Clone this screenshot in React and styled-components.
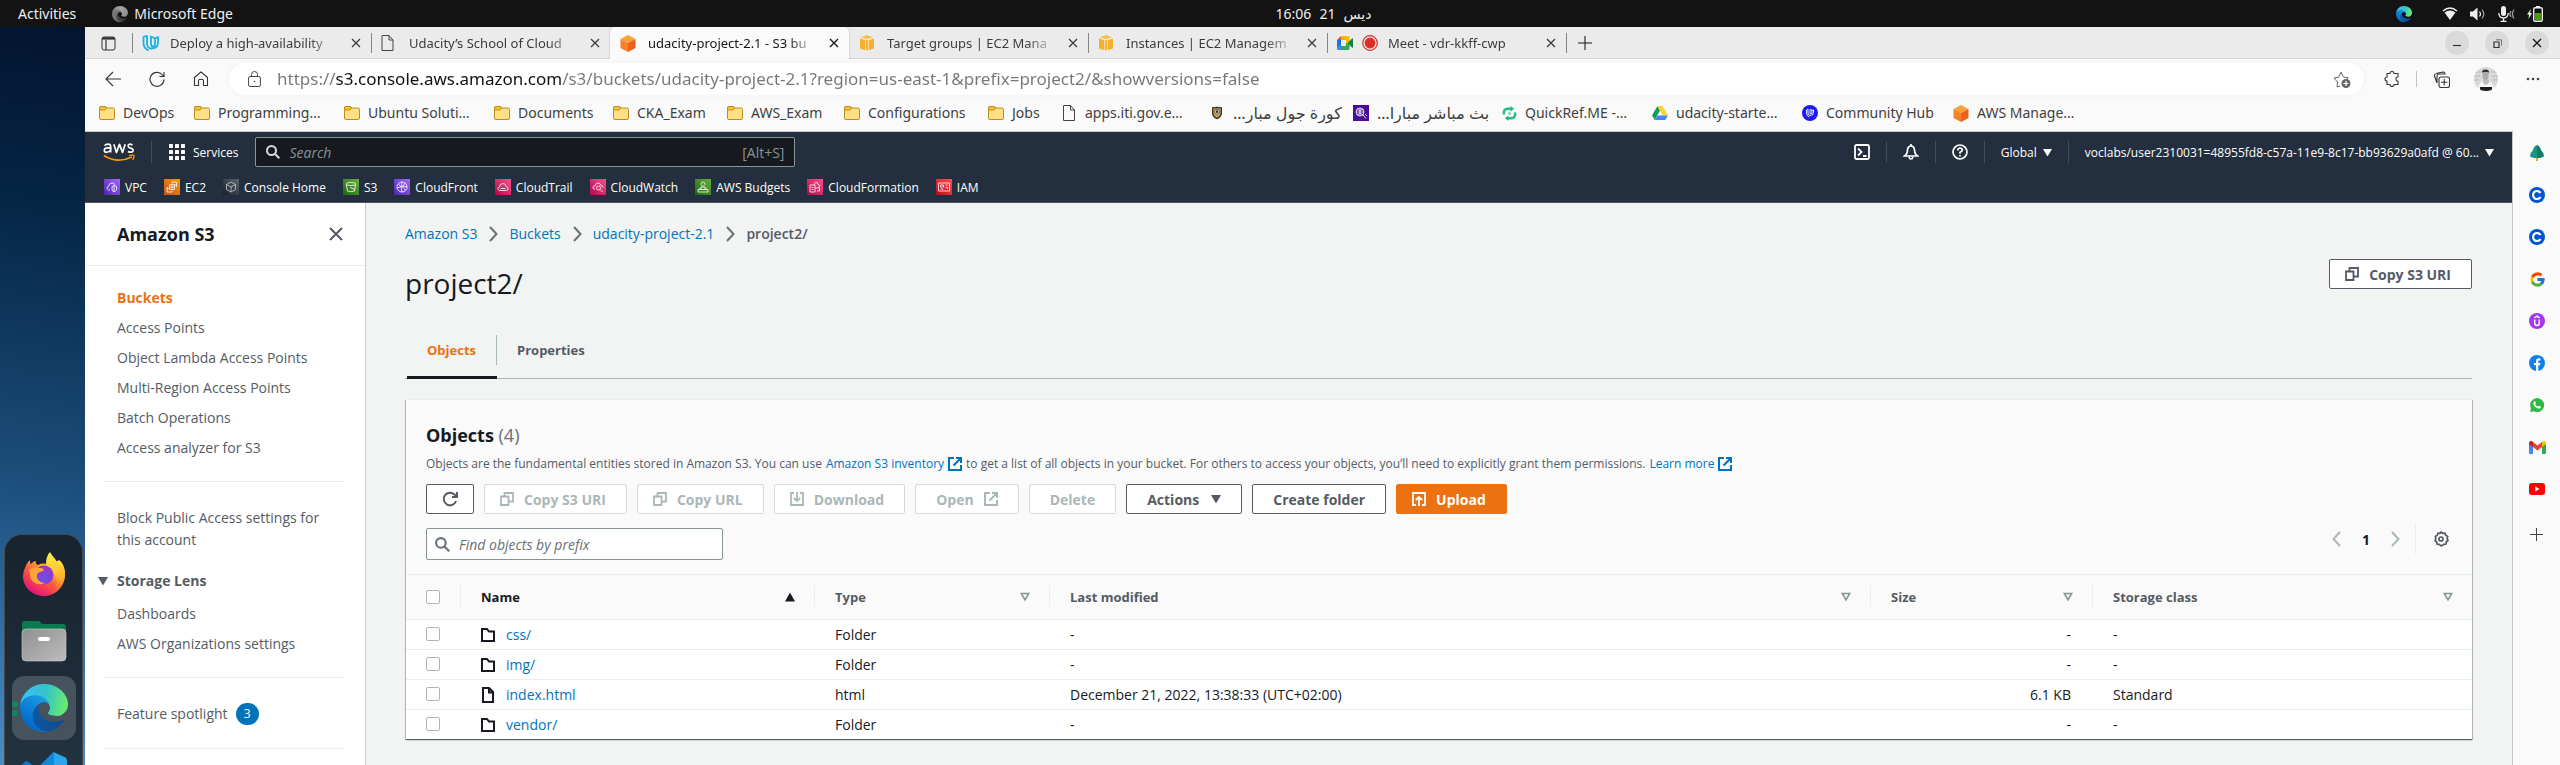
import React from "react";
import styled, { createGlobalStyle, css } from "styled-components";
import { FcGoogle } from "react-icons/fc";

const UI = `"Noto Sans", "DejaVu Sans", sans-serif`;
const AWS = `"Open Sans", "Noto Sans", sans-serif`;

const GlobalStyle = createGlobalStyle`
  * { box-sizing: border-box; }
  body { margin: 0; font-family: ${UI}; font-size: 14px; color: #16191f; }
  button { font: inherit; color: inherit; background: none; border: 0; padding: 0; cursor: pointer; white-space: nowrap; }
  input { font: inherit; color: inherit; min-width: 0; border: 0; background: none; outline: none; padding: 0; }
  svg { display: block; flex: none; }
  a { text-decoration: none; color: inherit; }
  ul, ol { list-style: none; margin: 0; padding: 0; }
  h1, h2, p { margin: 0; }
`;

/* ---------- layout shell ---------- */
const Screen = styled.div`
  height: 100vh;
  display: flex;
  flex-direction: column;
  overflow: hidden;
`;
const SystemBar = styled.header`
  height: 27px;
  flex: none;
  background: #131313;
  color: #f0f0f0;
  display: grid;
  grid-template-columns: 1fr auto 1fr;
  align-items: center;
  padding: 0 17px 0 18px;
  font-size: 14px;
`;
const SystemLeft = styled.div`
  display: flex;
  align-items: center;
  gap: 36px;
`;
const AppMenu = styled.button`
  display: flex;
  align-items: center;
  gap: 6px;
`;
const Clock = styled.button`
  display: flex;
  gap: 8px;
  padding-left: 86px;
`;
const Tray = styled.div`
  display: flex;
  justify-content: flex-end;
  align-items: center;
  gap: 12px;
  & > :first-child { margin-right: 18px; }
`;
const Desktop = styled.div`
  flex: 1;
  min-height: 0;
  display: flex;
`;
const Wallpaper = styled.aside`
  width: 85px;
  flex: none;
  display: flex;
  flex-direction: column;
  justify-content: flex-end;
  padding: 0 2px 0 4px;
  background: linear-gradient(188deg, #03142f 0%, #062645 25%, #0d3459 38%, #1c4f7c 62%, #2b6597 76%, #4a8dc4 100%);
`;
const Dock = styled.nav`
  height: 231px;
  overflow: hidden;
  display: flex;
  flex-direction: column;
  align-items: center;
  gap: 3px;
  padding-top: 7px;
  border: 1px solid #45494d;
  border-bottom: 0;
  border-radius: 18px 18px 0 0;
  background: linear-gradient(#17232e, #22323f);
`;
const DockButton = styled.button`
  position: relative;
  width: 64px;
  height: 64px;
  flex: none;
  border-radius: 12px;
  display: grid;
  place-items: center;
  background: ${(p) => (p.$active ? "#46535d" : "transparent")};
`;
const Running = styled.span`
  position: absolute;
  left: 0;
  top: 25px;
  display: grid;
  gap: 3px;
  i { width: 6px; height: 6px; border-radius: 50%; background: #0f8a5f; }
`;
const Browser = styled.section`
  flex: 1;
  min-width: 0;
  display: flex;
  flex-direction: column;
  background: #fafafa;
`;

/* ---------- browser chrome ---------- */
const TabStrip = styled.div`
  height: 32px;
  flex: none;
  display: flex;
  align-items: center;
  background: #ebebeb;
  box-shadow: inset 0 -1px 0 #d6d6d6;
`;
const TabMenu = styled.button`
  width: 47px;
  padding-left: 16px;
`;
const Tab = styled.div`
  width: 239px;
  height: 32px;
  flex: none;
  display: flex;
  align-items: center;
  padding: 0 10px 0 0;
  color: ${(p) => (p.$active ? "#161616" : "#3c3c3c")};
  &::before {
    content: "";
    width: 1px;
    height: 20px;
    margin-right: 9px;
    background: ${(p) => (p.$bare ? "transparent" : "#858585")};
  }
  ${(p) =>
    p.$active &&
    css`
      background: #fafafa;
      border-radius: 5px 5px 0 0;
      box-shadow: 0 0 2px #b5b5b5;
      clip-path: inset(0 -3px 0 -3px);
    `}
`;
const TabIcon = styled.span`
  min-width: 18px;
  margin-right: 10px;
  display: flex;
  gap: 9px;
  align-items: center;
`;
const TabTitle = styled.span`
  flex: 1;
  font-size: 13px;
  line-height: 20px;
  white-space: nowrap;
  mask-image: linear-gradient(90deg, #000 calc(100% - 30px), transparent);
`;
const TabClose = styled.button`
  width: 10px;
  margin-left: 11px;
`;
const NewTab = styled.button`
  display: flex;
  align-items: center;
  gap: 11px;
  &::before { content: ""; width: 1px; height: 20px; background: #858585; }
`;
const WindowControls = styled.div`
  margin-left: auto;
  display: flex;
  gap: 16px;
  padding-right: 11px;
`;
const Round = styled.button`
  width: 24px;
  height: 24px;
  border-radius: 50%;
  background: #dadada;
  display: grid;
  place-items: center;
`;
const AddressRow = styled.div`
  flex: none;
  height: 40px;
  display: flex;
  align-items: center;
  padding: 0 20px;
  color: #4a4a4a;
`;
const NavButtons = styled.div`
  display: flex;
  gap: 28px;
  margin-right: 20px;
`;
const AddressBox = styled.label`
  flex: 1;
  height: 32px;
  border-radius: 16px;
  background: #fff;
  box-shadow: 0 0 4px #ededed;
  display: flex;
  align-items: center;
  padding: 0 13px 0 19px;
  gap: 16px;
`;
const Address = styled.input`
  flex: 1;
  font-size: 17px;
  line-height: 24px;
  background: linear-gradient(90deg, #767676 58px, #111 58px 285px, #767676 285px);
  background-clip: text;
  -webkit-background-clip: text;
  color: transparent;
`;
const ToolButtons = styled.div`
  display: flex;
  align-items: center;
  margin-left: 20px;
  gap: 16px;
`;
const Bar = styled.span`
  width: 1px;
  height: 16px;
  background: #c4c4c4;
`;
const Avatar = styled.button`
  margin: 0 12px 0 8px;
`;
const Bookmarks = styled.nav`
  flex: none;
  height: 32px;
  padding: 0 14px 4px;
  display: flex;
  align-items: center;
  color: #3f3f3f;
`;
const Bookmark = styled.a`
  width: ${(p) => p.$w}px;
  display: flex;
  align-items: center;
  gap: 8px;
  font-size: 14px;
  line-height: 20px;
  white-space: nowrap;
  span[dir="rtl"] { font-size: 16px; }
`;
const BookmarkIcon = styled.span`
  width: 16px;
  display: grid;
  place-items: center;
`;
const PageRow = styled.div`
  flex: 1;
  min-height: 0;
  display: flex;
`;
const Page = styled.div`
  flex: 1;
  min-width: 0;
  display: flex;
  flex-direction: column;
  border-top: 1px solid #c3cbc8;
  font-family: ${AWS};
`;
const EdgeRail = styled.nav`
  width: 48px;
  border-left: 1px solid #c5c5c5;
  display: flex;
  flex-direction: column;
  align-items: center;
  gap: 26px;
  padding-top: 14px;
  & > :last-child { margin-top: 3px; }
`;
const RailButton = styled.a`
  width: 16px;
  height: 16px;
  display: grid;
  place-items: center;
  color: #444;
`;

/* ---------- AWS header ---------- */
const AwsHeader = styled.header`
  flex: none;
  height: 71px;
  background: #232f3e;
  border-bottom: 1px solid #4a5566;
  color: #fff;
  font-size: 12px;
  padding: 5px 18px 0 18px;
`;
const HeaderRow = styled.div`
  display: flex;
  align-items: center;
  height: 30px;
`;
const Divider = styled.span`
  width: 1px;
  height: 22px;
  background: #414d5c;
`;
const Services = styled.button`
  display: flex;
  align-items: center;
  gap: 8px;
  margin: 0 17px;
`;
const LogoLink = styled.a`
  margin-right: 16px;
`;
const AwsSearch = styled.label`
  width: 540px;
  height: 30px;
  border: 1px solid #879596;
  border-radius: 2px;
  background: #16191f;
  color: #879596;
  display: flex;
  align-items: center;
  gap: 9px;
  padding: 0 10px;
  font-size: 14px;
  svg { color: #d5dbdb; }
  input { flex: 1; }
  input::placeholder { font-style: italic; color: #879596; opacity: 1; }
`;
const Account = styled.div`
  margin-left: auto;
  display: flex;
  align-items: center;
  gap: 16px;
`;
const MenuButton = styled.button`
  display: flex;
  align-items: center;
  gap: 6px;
`;
const Favorites = styled.nav`
  height: 35px;
  padding: 5px 0 0 1px;
  display: flex;
  align-items: center;
  gap: 17px;
`;
const Favorite = styled.a`
  display: flex;
  align-items: center;
  gap: 5px;
`;

/* ---------- S3 side navigation ---------- */
const Console = styled.div`
  flex: 1;
  min-height: 0;
  display: flex;
  background: #f2f3f3;
`;
const SideNav = styled.nav`
  width: 281px;
  flex: none;
  background: #fff;
  border-right: 1px solid #c8cccd;
  color: #545b64;
  line-height: 22px;
  overflow: hidden;
`;
const SideTitle = styled.div`
  height: 63px;
  display: flex;
  align-items: center;
  justify-content: space-between;
  padding: 0 22px 0 32px;
  border-bottom: 1px solid #eaeded;
  font-size: 18px;
  font-weight: 700;
  color: #16191f;
`;
const SideList = styled.ul`
  margin: 0 20px;
  padding: ${(p) => p.$pad || "25px"} 0 ${(p) => p.$end || "22px"} 12px;
  border-bottom: 1px solid #eaeded;
  display: grid;
  gap: 8px;
`;
const SideLink = styled.a`
  display: block;
  font-weight: ${(p) => (p.$current ? 700 : 400)};
  color: ${(p) => (p.$current ? "#ec7211" : "#545b64")};
`;
const Group = styled.button`
  display: flex;
  align-items: center;
  gap: 9px;
  margin: 11px 0 3px -19px;
  font-weight: 700;
`;
const Spotlight = styled(SideLink)`
  display: flex;
  align-items: center;
  gap: 8px;
`;
const Badge = styled.span`
  min-width: 23px;
  height: 22px;
  border-radius: 11px;
  background: #0073bb;
  color: #fff;
  font-size: 12px;
  text-align: center;
`;

/* ---------- content ---------- */
const Content = styled.main`
  flex: 1;
  min-width: 0;
  padding: 0 40px 0 39px;
`;
const Crumbs = styled.ol`
  display: flex;
  align-items: center;
  gap: 11px;
  padding-top: 20px;
  line-height: 22px;
  color: #0073bb;
  li { display: flex; align-items: center; gap: 12px; }
  li:last-child { color: #545b64; font-weight: 600; }
`;
const TitleRow = styled.div`
  display: flex;
  justify-content: space-between;
  align-items: flex-start;
  padding-top: 14px;
  height: 90px;
`;
const Title = styled.h1`
  font-size: 28px;
  font-weight: 400;
  line-height: 36px;
  padding-top: 6px;
`;
const Tabs = styled.div`
  height: 44px;
  display: flex;
  border-bottom: 1px solid #aab7b8;
  margin-bottom: 20px;
`;
const PageTab = styled.button`
  height: 44px;
  margin-left: ${(p) => (p.$active ? 2 : 0)}px;
  padding-bottom: 12px;
  border-bottom: 3px solid ${(p) => (p.$active ? "#16191f" : "transparent")};
  font-size: 13px;
  font-weight: 700;
  color: ${(p) => (p.$active ? "#ec7211" : "#545b64")};
  span { display: block; line-height: 30px; padding: 0 20px; border-right: 1px solid ${(p) => (p.$active ? "#aab7b8" : "transparent")}; }
`;
const Card = styled.section`
  margin-left: 1px;
  background: #fff;
  border-top: 1px solid #eaeded;
  box-shadow: 0 1px 1px 0 rgba(0, 28, 36, 0.5), 1px 1px 1px 0 rgba(0, 28, 36, 0.2), -1px 1px 1px 0 rgba(0, 28, 36, 0.2);
`;
const CardHeader = styled.div`
  background: #fafafa;
  padding: 24px 21px 14px 20px;
  border-bottom: 1px solid #eaeded;
`;
const CardTitle = styled.h2`
  font-size: 18px;
  line-height: 22px;
  span { font-weight: 400; color: #687078; }
`;
const Description = styled.p`
  display: flex;
  align-items: center;
  gap: 4px;
  margin: 8px 0 10px;
  font-size: 12px;
  line-height: 20px;
  color: #545b64;
  white-space: nowrap;
`;
const Link = styled.a`
  color: #0073bb;
  display: inline-flex;
  align-items: center;
  gap: 4px;
`;
const Actions = styled.div`
  display: flex;
  gap: 10px;
`;
const Button = styled.button`
  height: 30px;
  flex: none;
  display: flex;
  align-items: center;
  gap: ${(p) => p.$gap || 10}px;
  padding: ${(p) => (p.$square ? "0 15px" : p.$icon ? "0 20px 0 15px" : "0 20px")};
  border: 1px solid #545b64;
  border-radius: 2px;
  background: #fff;
  font-weight: 700;
  color: #545b64;
  &:disabled { border-color: #d5dbdb; color: #aab7b8; }
  ${(p) => p.$primary && css`border-color: #ec7211; background: #ec7211; color: #fff;`}
`;
const FilterRow = styled.div`
  display: flex;
  justify-content: space-between;
  padding-top: 14px;
`;
const Filter = styled.label`
  width: 297px;
  height: 32px;
  border: 1px solid #879596;
  border-radius: 2px;
  background: #fff;
  color: #687078;
  display: flex;
  align-items: center;
  gap: 9px;
  padding: 0 8px;
  input { flex: 1; }
  input::placeholder { font-style: italic; color: #687078; opacity: 1; }
`;
const Pager = styled.div`
  display: flex;
  align-items: center;
  height: 30px;
  margin-top: -4px;
  padding-right: 2px;
  color: #aab7b8;
  b { width: 50px; text-align: center; color: #16191f; }
`;
const Settings = styled.button`
  margin-left: 15px;
  height: 30px;
  border-left: 1px solid #eaeded;
  padding-left: 17px;
  color: #545b64;
`;
const Table = styled.table`
  width: 100%;
  table-layout: fixed;
  border-collapse: collapse;
  text-align: left;
  th { height: 44px; padding: 0; background: #fafafa; border-bottom: 1px solid #eaeded; font-size: 13px; }
  td { height: 30px; padding: 2px 21px 0; border-bottom: 1px solid #eaeded; line-height: 20px; white-space: nowrap; }
  tr:last-child td { border-bottom: 0; }
`;
const Col = styled.col`
  width: ${(p) => (p.$w ? p.$w + "px" : "auto")};
`;
const HeadCell = styled.div`
  height: 21px;
  display: flex;
  align-items: center;
  justify-content: space-between;
  padding: 0 19px 0 20px;
  border-left: 1px solid #eaeded;
  color: ${(p) => (p.$sorted ? "#16191f" : "#545b64")};
`;
const CheckCell = styled.td`
  && { padding: 0 20px; }
`;
const Check = styled.input.attrs({ type: "checkbox" })`
  appearance: none;
  display: block;
  width: 14px;
  height: 14px;
  margin: 0;
  border: 1px solid #aab7b8;
  border-radius: 2px;
  background: #fff;
  th & { margin-left: 20px; }
`;
const NameLink = styled.a`
  display: flex;
  align-items: center;
  gap: 11px;
  color: #0073bb;
`;
const Right = styled.td`
  text-align: right;
`;

/* ---------- icons ---------- */
const Svg = ({ s = 16, w, h, vb = "0 0 16 16", children, ...p }) => (
  <svg width={w || s} height={h || s} viewBox={vb} fill="none" stroke="currentColor" {...p} aria-hidden="true">
    {children}
  </svg>
);
const EdgeLogo = ({ s, id, grey }) => (
  <Svg s={s} vb="0 0 256 256" stroke="none">
    <defs>
      <linearGradient id={id + "a"} x1="60" y1="177" x2="241" y2="177" gradientUnits="userSpaceOnUse">
        <stop offset="0" stopColor={grey ? "#4a4a4a" : "#0c59a4"} />
        <stop offset="1" stopColor={grey ? "#333" : "#114a8b"} />
      </linearGradient>
      <linearGradient id={id + "b"} x1="150" y1="90" x2="45" y2="230" gradientUnits="userSpaceOnUse">
        <stop offset="0" stopColor={grey ? "#777" : "#1b9de2"} />
        <stop offset="1" stopColor={grey ? "#777" : "#0067ca"} />
      </linearGradient>
      <linearGradient id={id + "c"} x1="20" y1="60" x2="245" y2="110" gradientUnits="userSpaceOnUse">
        <stop offset="0" stopColor={grey ? "#8a8a8a" : "#35c1f1"} />
        <stop offset=".5" stopColor={grey ? "#a5a5a5" : "#36c4c8"} />
        <stop offset="1" stopColor={grey ? "#8d8d8d" : "#66eb6e"} />
      </linearGradient>
    </defs>
    <path fill={`url(#${id}a)`} d="M231 190.500c-3.400 1.800-6.900 3.400-10.500 4.700-11.500 4.300-23.600 6.500-35.900 6.500-47.300 0-88.500-32.500-88.500-74.300.1-11.400 6.400-21.900 16.400-27.300-42.800 1.800-53.800 46.400-53.800 72.500 0 74 68.100 81.400 82.800 81.400 7.900 0 19.800-2.300 27-4.600l1.300-.4c27.600-9.500 51-28.100 66.600-52.800 1.200-1.900.6-4.300-1.200-5.500-1.300-.8-2.900-.9-4.200-.2z" />
    <path fill={`url(#${id}b)`} d="M105.700 241.400c-8.900-5.500-16.600-12.800-22.700-21.300-26.300-36-18.400-86.500 17.600-112.800 3.800-2.700 7.700-5.200 11.900-7.200 3.100-1.500 8.400-4.100 15.500-4 10.100.1 19.600 4.900 25.700 13 4 5.400 6.300 11.900 6.400 18.700 0-.2 24.500-79.600-80-79.600-43.900 0-80 41.700-80 78.200-.2 19.300 4 38.500 12.100 56 27.600 58.800 94.800 87.600 156.400 67.100-21.100 6.600-44.100 3.700-62.900-8.100z" />
    <path fill={`url(#${id}c)`} d="M152.300 148.900c-.8 1-3.300 2.500-3.300 5.700 0 2.600 1.700 5.100 4.700 7.200 14.400 10 41.500 8.700 41.600 8.700 10.700 0 21.100-2.900 30.300-8.300 18.800-11 30.400-31.100 30.400-52.900.3-22.400-8-37.300-11.300-43.900C223.500 23.900 177.700 0 128 0 58 0 1 56.200 0 126.200c.5-36.500 36.800-66 80-66 3.500 0 23.500.3 42 10.100 16.300 8.600 24.900 18.900 30.800 29.200 6.200 10.700 7.300 24.100 7.300 29.500s-2.800 13.300-7.800 19.900z" />
  </Svg>
);
const Firefox = () => (
  <Svg s={44} vb="0 0 44 44" stroke="none">
    <defs>
      <linearGradient id="ffa" x1="36" y1="4" x2="12" y2="42" gradientUnits="userSpaceOnUse">
        <stop offset="0" stopColor="#fff44f" />
        <stop offset=".35" stopColor="#ffb02a" />
        <stop offset=".6" stopColor="#ff5b3a" />
        <stop offset="1" stopColor="#e3147a" />
      </linearGradient>
      <linearGradient id="ffb" x1="26" y1="0" x2="40" y2="36" gradientUnits="userSpaceOnUse">
        <stop offset="0" stopColor="#fff04a" />
        <stop offset=".6" stopColor="#ffc02f" />
        <stop offset="1" stopColor="#ff8a2c" stopOpacity="0.2" />
      </linearGradient>
      <radialGradient id="ffc" cx=".5" cy=".7" r=".7">
        <stop offset="0" stopColor="#6b50e6" />
        <stop offset="1" stopColor="#a032c8" />
      </radialGradient>
    </defs>
    <path fill="url(#ffa)" d="M3 16C4 13 5 11 8 8c0 2 0 3 1 4 2-2 3-3 5-3-1 2 0 3 2 4 4-2 9-2 11 1l10-6c4 3 6 8 6 14 0 12-9 22-21 22S1 35 1 24c0-3 1-6 2-8z" />
    <path fill="url(#ffb)" d="M28 0c2 4 5 6 7 10l2 0c1 1 2 3 2 4l1-1c3 5 4 10 2 16-2 7-7 11-12 12 6-5 6-12 3-18-3-5-9-6-9-12 0-5 2-9 4-11z" />
    <circle cx="22" cy="23" r="9.500" fill="url(#ffc)" />
    <path fill="#ffa436" d="M7 18c4-3 7-2 11-2 3 0 5 2 3 3-3 1-5 1-6 4-1 4 3 8 8 8-8 4-16-2-15-10-1-1-1-2-1-3z" />
  </Svg>
);
const Files = () => (
  <Svg w={46} h={42} vb="0 0 46 42" stroke="none">
    <defs>
      <linearGradient id="fl" x1="0" y1="0" x2="1" y2="1">
        <stop offset="0" stopColor="#8f8f8f" />
        <stop offset="1" stopColor="#bdbdbd" />
      </linearGradient>
    </defs>
    <path fill="#0a7a50" d="M1 4q0-3 3-3h13q2 0 3 2l1 1h21q3 0 3 3v14H1z" />
    <rect x="1" y="9" width="44" height="32" rx="4" fill="url(#fl)" stroke="#d0d0d0" strokeOpacity=".6" />
    <rect x="17" y="17" width="12" height="4" rx="2" fill="#fff" />
  </Svg>
);
const VsCode = () => (
  <Svg s={46} vb="0 0 44 44" stroke="none">
    <path fill="#0a76c4" d="M1 12l3-3q1-1 3 0l26 23v10L1 15z" />
    <path fill="#1289d8" d="M31 0L3 28l4 4L31 14z" />
    <path fill="#2ba5ee" d="M31 0l11 5q2 1 2 3v28q0 2-2 3l-11 5z" />
  </Svg>
);
const Close = ({ s = 10, w = 1 }) => (
  <Svg s={s} vb="0 0 10 10" strokeWidth={w}><path d="M1 1l8 8M9 1l-8 8" /></Svg>
);
const Plus = ({ s = 13 }) => <Svg s={s} vb="0 0 13 13"><path d="M6.500 0v13M0 6.500h13" /></Svg>;
const Udacity = () => (
  <Svg w={18} h={18} vb="0 0 18 18" stroke="#18b3e0" strokeWidth="1.800">
    <path d="M5 1.500l-3.500 1.500v6c0 4 2 6 5 7.500M5 1.500v8c0 3 2 5 4 5 4 0 7-2 7-6V3l-3 1.500M9 2.500v7.500c0 2 1 2.500 2 2.500 2 0 2-2 2-3V4.500z" strokeLinejoin="round" />
  </Svg>
);
const Doc = ({ w = 12 }) => (
  <Svg w={w} h={16} vb="0 0 12 16" stroke="#444"><path d="M1 .5h6.500L11.500 5v10.500H.5V.5zM7.500.5V5h4" /></Svg>
);
const S3Cube = () => (
  <Svg w={16} h={17} vb="0 0 16 17" stroke="none">
    <path fill="#f9a13a" d="M8 0l7.500 4L8 8 .5 4z" /><path fill="#f68128" d="M.5 4L8 8v9L.5 13z" /><path fill="#e8621a" d="M15.500 4L8 8v9l7.500-4z" />
  </Svg>
);
const Ec2Cube = () => (
  <Svg s={16} stroke="none">
    <path fill="#f3b12d" d="M1 3.500l5.500 1.800v10L1 13.500zM15 3.500L9.500 5.300v10L15 13.500zM6.500 5.300h3v10h-3z" />
    <path fill="#f7c04a" d="M8 0l6 2.200L8 4.300 2 2.200z" /><path stroke="#fff" strokeWidth=".6" d="M6.600 5v10.500M9.400 5v10.500" />
  </Svg>
);
const Meet = () => (
  <Svg w={16} h={16} stroke="none">
    <path fill="#1a73e8" d="M0 5h4v6H0z" /><path fill="#ea4335" d="M0 5l4-4v4z" /><path fill="#fbbc04" d="M4 1h7q1.500 0 1.500 1.500V7L9 9V5H4z" />
    <path fill="#34a853" d="M9 8l3.500 1v4.500Q12.500 15 11 15H4v-4h5z" /><path fill="#4285f4" d="M0 11h4v4H1.500Q0 15 0 13.500z" /><path fill="#188038" d="M10.500 8L15 3.500q1-.5 1 .5v8q0 1-1 .5z" />
  </Svg>
);
const Rec = () => (
  <Svg s={16} stroke="#d93025" strokeWidth="1.200"><circle cx="8" cy="8" r="7.300" /><circle cx="8" cy="8" r="4.800" fill="#d93025" /></Svg>
);
const Folder = () => (
  <Svg w={16} h={14} vb="0 0 16 14" stroke="#b98e1e">
    <path fill="#ffdf85" d="M.5 2Q.5.500 2 .5h4q1 0 1.500 1.500H14q1.500 0 1.500 1.500V12q0 1.500-1.500 1.500H2Q.5 13.500.5 12z" />
    <path fill="#f7c52f" d="M.5 2Q.5.500 2 .5h4q1 0 1.500 1.500L6 4H.500z" />
  </Svg>
);
const Shield = () => (
  <Svg w={12} h={14} vb="0 0 14 15" stroke="#3a3320"><path fill="#c8a455" strokeWidth="1.600" d="M2 1.500L7 1l5 .5v7q-1 4-5 5.500Q3 12.500 2 8.500z" /><circle cx="7" cy="6" r="3" fill="#eee" strokeWidth=".8" /><path fill="#222" d="M6 5h2v2H6z" /></Svg>
);
const PurpleBall = () => (
  <Svg s={16}><rect width="16" height="16" fill="#4a0f96" stroke="none" /><g stroke="#fff" strokeWidth=".8"><circle cx="7" cy="7" r="4" /><path d="M3 7h8M7 3v8M4 4.500q3 2 6 0M4 9.500q3-2 6 0M10 10l3 3.500M12 9l2 2" /></g></Svg>
);
const Quick = () => (
  <Svg s={15} stroke="#27b98a" strokeWidth="2.600"><path d="M2 9V6q1-3 4-3h4M14 7v3q-1 3-4 3H6" /><path d="M9 0l4 3-4 3zM7 10l-4 3 4 3z" fill="#27b98a" stroke="none" /><circle cx="8" cy="8" r="1" strokeWidth="1" /></Svg>
);
const Drive = () => (
  <Svg w={16} h={14} vb="0 0 16 14" stroke="none"><path fill="#0f9d58" d="M5.500 0L0 9.500 2.700 14 8 4.500z" /><path fill="#ffcf3f" d="M5.500 0h5L16 9.500h-5.300z" /><path fill="#4285f4" d="M5.500 9.500H16L13.300 14H2.700z" /></Svg>
);
const Hub = () => (
  <Svg s={16} stroke="#fff"><circle cx="8" cy="8" r="8" fill="#1c1cf0" stroke="none" /><path d="M6 4L4.500 5v3q0 3 3 4M6 4v4q0 2 2 2.500 3.500 0 3.500-3V5L10 5.500M8 4.500v4q1 1 2-.5V5z" strokeWidth=".9" /></Svg>
);

const bookmarkItems = [
  ["DevOps", <Folder />, 95], ["Programming…", <Folder />, 150], ["Ubuntu Soluti…", <Folder />, 150], ["Documents", <Folder />, 119],
  ["CKA_Exam", <Folder />, 114], ["AWS_Exam", <Folder />, 117], ["Configurations", <Folder />, 144], ["Jobs", <Folder />, 73],
  ["apps.iti.gov.e…", <Doc />, 148], ["كورة جول مبار…", <Shield />, 144, "rtl"], ["بث مباشر مبارا…", <PurpleBall />, 148, "rtl"],
  ["QuickRef.ME -…", <Quick />, 151], ["udacity-starte…", <Drive />, 150], ["Community Hub", <Hub />, 151], ["AWS Manage…", <S3Cube />, 130],
];
const tabItems = [
  { t: "Deploy a high-availability", i: <Udacity /> },
  { t: "Udacity’s School of Cloud", i: <Doc w={13} /> },
  { t: "udacity-project-2.1 - S3 bu", i: <S3Cube />, active: true },
  { t: "Target groups | EC2 Mana", i: <Ec2Cube />, bare: true },
  { t: "Instances | EC2 Managem", i: <Ec2Cube /> },
  { t: "Meet - vdr-kkff-cwp", i: <><Meet /><Rec /></> },
];

const Tile = ({ id, a, b, children }) => (
  <Svg s={16} stroke="#fff" strokeWidth=".8">
    <defs><linearGradient id={id} x1="0" y1="1" x2="1" y2="0"><stop stopColor={a} /><stop offset="1" stopColor={b} /></linearGradient></defs>
    <rect width="16" height="16" fill={`url(#${id})`} stroke="none" />
    {children}
  </Svg>
);
const cloud = "M5 11.500H4.500Q3 11 3 9.500T4.500 8Q5 4.500 8 4.500T11 7.500Q13 7.500 13 9.500T11.500 11.500";
const favorites = [
  ["VPC", <Tile id="t1" a="#4d27a8" b="#a166ff"><path d="M6 11H4.500Q3 10.500 3 9t1.500-1.500Q5 4 8 4q2.500 0 3 2M8 7.500l2-1 2.500 1V10q0 2-2.500 3-2-1-2-3zM10 7v6" /></Tile>],
  ["EC2", <Tile id="t2" a="#c8511b" b="#ff9900"><path d="M5.500 5.500h5v5h-5zM7 7h2v2H7zM3 8v5h5v-1.500M5 9.500H3M12.500 8V3H8v1.500M11 6h2" /></Tile>],
  ["Console Home", <Tile id="t3" a="#1a1f26" b="#5a6472"><path stroke="#c5cad0" d="M8 3l4.500 2.500v5L8 13l-4.500-2.500v-5zM3.500 5.500L8 8l4.500-2.500M8 8v5" /></Tile>],
  ["S3", <Tile id="t4" a="#1b660f" b="#6cae3e"><path d="M3 5q0-1.500 5-1.500T13 5t-5 1.500T3 5zM3.300 5.500L4.500 12q3 1.500 7 0l1-6.500M7 8.500l5 2" /></Tile>],
  ["CloudFront", <Tile id="t5" a="#4d27a8" b="#a166ff"><circle cx="8" cy="8" r="5" /><path d="M4.500 5q3.500 2 3.500 8M8 3q-2 4 4 8.500M3 9q6-3 10-1M11 4l-2 3" /></Tile>],
  ["CloudTrail", <Tile id="t6" a="#b0084d" b="#ff4f8b"><path d={cloud + "H5"} /><path d="M5.500 9.500h5" /></Tile>],
  ["CloudWatch", <Tile id="t7" a="#b0084d" b="#ff4f8b"><path d="M5 10H4Q2.500 9.500 3 8t2-1q.500-3 3-3t3 2.500q2 0 2 2" /><circle cx="8.500" cy="9" r="2" /><path d="M10 10.500l2.500 2.500" /></Tile>],
  ["AWS Budgets", <Tile id="t8" a="#1b660f" b="#6cae3e"><path d="M3 13h10v-2.500H3zM6 10.500V8h4v2.500M5 10V8.500M11 10V8.500M6 5.500q0-2.500 2-2.500t2 2.500L8 7.500z" /></Tile>],
  ["CloudFormation", <Tile id="t9" a="#b0084d" b="#ff4f8b"><path d="M3 6h5v7H3zM4.500 8.500h2M4.500 10.500h2M8 9h2.500q2 0 2-2T11 5.500Q10.500 3 8.500 3.500 7 4 7 6M12.500 9v3H10" /></Tile>],
  ["IAM", <Tile id="t10" a="#bd0816" b="#ff5252"><path d="M2.500 4h11v8h-11zM4.500 6h3v2h-3zM4.500 10h3M9.500 6h2M9.500 8.500h2v1.500" /></Tile>],
];

const AwsLogo = () => (
  <Svg w={32} h={20} vb="0 0 32 20" strokeWidth="1.700" strokeLinejoin="round">
    <path d="M1.600 3.600Q3 2.200 5 2.200q2.700 0 2.700 2.600v5.600M7.700 6.200Q1.300 5 1.300 8.300q0 2 2.200 2 2.800 0 4.200-2.500" />
    <path d="M10.800 2.200l2.700 8.200 3-8 3 8 2.700-8.200" />
    <path d="M29.500 3Q25.200 1 25.200 4q0 1.500 2.200 2.100 2.700.6 2.700 2.200 0 3-5.200 1.300" />
    <path stroke="#f90" d="M.8 13.500q13.500 8.500 28 1.500" strokeWidth="1.600" />
    <path stroke="#f90" d="M26 13.600q3.500-.8 5-.2.200 2-1.300 4.600" strokeWidth="1.300" />
  </Svg>
);
const Apps = () => (
  <Svg s={16} stroke="none" fill="#fff">{[0, 6, 12].map((x) => [0, 6, 12].map((y) => <rect key={x + "-" + y} x={x} y={y} width="4" height="4" rx=".5" />))}</Svg>
);
const Magnify = ({ s = 14 }) => <Svg s={s} vb="0 0 14 14" strokeWidth="2"><circle cx="5.500" cy="5.500" r="4.500" /><path d="M8.800 8.800L13.300 13.300" /></Svg>;
const Caret = ({ s = 9 }) => <Svg s={s} vb="0 0 10 10" stroke="none" fill="currentColor"><path d="M0 1h10L5 9.500z" /></Svg>;
const SortUp = () => <Svg s={10} vb="0 0 10 10" stroke="none" fill="#16191f"><path d="M5 .5L10 9.500H0z" /></Svg>;
const SortNone = () => <Svg s={10} vb="0 0 10 10" stroke="#879596" strokeWidth="1.600"><path d="M1.300 1.500h7.400L5 8z" /></Svg>;
const Chevron = ({ left, c = "#879596", w = 2 }) => (
  <Svg w={9} h={16} vb="0 0 9 16" stroke={c} strokeWidth={w}><path d={left ? "M8 1L1.500 8 8 15" : "M1 1l6.500 7L1 15"} /></Svg>
);
const Copy = () => <Svg s={14} vb="0 0 14 14" strokeWidth="1.800"><path d="M1 4.500h7.500V13H1zM4.500 4V1H13v8.500H9" /></Svg>;
const External = ({ s = 14 }) => <Svg s={s} vb="0 0 14 14" strokeWidth="2"><path d="M6 1H1v12h12V8M8 1h5v5M13 1L5.500 8.500" /></Svg>;
const Download = () => <Svg s={14} vb="0 0 14 14" strokeWidth="1.800"><path d="M4 1H1v12h12V1h-3M7 0v9M3.800 6L7 9l3.200-3" /></Svg>;
const UploadIcon = () => <Svg s={14} vb="0 0 14 14" strokeWidth="1.800"><path d="M4 13H1V1h12v12h-3M7 14V5M3.800 8L7 5l3.200 3" /></Svg>;
const Refresh = () => <Svg s={16} strokeWidth="2"><path d="M14 10A6.300 6.300 0 1 1 12.500 3.500L14.500 5.500M15 1v5h-5" /></Svg>;
const FolderSmall = () => <Svg w={14} h={14} vb="0 0 14 14" stroke="#16191f" strokeWidth="2"><path d="M1 1h5l2 2.500h5V13H1z" /></Svg>;
const FileSmall = () => <Svg w={14} h={16} vb="0 0 14 16" stroke="#16191f" strokeWidth="2"><path d="M2 1h6l4 4v10H2zM8 1v4.500h4" /></Svg>;
const Gear = () => (
  <Svg s={16} strokeWidth="1.700">
    <path strokeLinejoin="round" d="M8 1l1.800 1.300 2.200-.2.800 2.100 1.900 1.200-.6 2.100.9 2-1.700 1.500-.4 2.200-2.200.2L8 14.900l-1.700-1.500-2.200-.2-.4-2.200L2 9.500l.9-2-.6-2.100 1.900-1.200.8-2.100 2.200.2z" />
    <circle cx="8" cy="8" r="2" />
  </Svg>
);
const CLogo = () => (
  <Svg s={16}><circle cx="8" cy="8" r="8" fill="#0056d2" stroke="none" /><path stroke="#fff" strokeWidth="2.200" d="M11.500 6A4 4 0 1 0 11.500 10" /></Svg>
);
const rail = [
  ["Tree", <Svg s={16} stroke="none"><path fill="#f5a11c" d="M7 11h2v5H7z" /><path fill="#127a6a" d="M8 0q3 1 4 5 3 3 3 6-1 2-7 2z" /><path fill="#1c9482" d="M8 0Q5 1 4 5 1 8 1 11q1 2 7 2z" /></Svg>],
  ["Coursera", <CLogo />],
  ["Coursera for business", <CLogo />],
  ["Google", <FcGoogle size={17} />],
  ["Udemy", <Svg s={16} stroke="#fff"><circle cx="8" cy="8" r="8" fill="#a435f0" stroke="none" /><path strokeWidth="1.500" d="M5.500 4.800L8 3.200l2.500 1.600M5.700 6.500V10q0 2.500 2.300 2.500t2.300-2.500V6.500" /></Svg>],
  ["Facebook", <Svg s={16} stroke="none"><circle cx="8" cy="8" r="8" fill="#0f80ee" /><path fill="#fff" d="M7 16V10.300H5V8h2V6.300q0-3 3-3l1.400.1v2h-1Q9.300 5.400 9.300 6.500V8h2.100l-.4 2.300H9.300V16z" /></Svg>],
  ["WhatsApp", <Svg s={14} stroke="none"><path fill="#2fb843" d="M0 16l1.100-4.200A8 8 0 1 1 4.200 15z" /><path fill="#fff" d="M5 3.800q.8-.3 1.200.6l.6 1.400q0 .5-.8 1.200 1 2 3 2.900l1-1q.4-.3 1 .1l1.400.7q.4 1-.4 1.800-1.200 1.100-3.500.2Q5 10 3.800 7q-.3-2 1.200-3.200z" /></Svg>],
  ["Gmail", <Svg w={17} h={13} vb="0 0 17 13" stroke="none"><path fill="#4285f4" d="M0 2l4 3v8H1q-1 0-1-1z" /><path fill="#34a853" d="M17 2l-4 3v8h3q1 0 1-1z" /><path fill="#ea4335" d="M4 1l4.500 3.500L13 1v5L8.500 9.500 4 6z" /><path fill="#c5221f" d="M0 2Q.5-.8 3 .3L4 1v5L0 3z" /><path fill="#fbbc04" d="M17 2q-.5-2.800-3-1.700L13 1v5l4-3z" /></Svg>],
  ["YouTube", <Svg w={16} h={12} vb="0 0 16 12" stroke="none"><rect width="16" height="12" rx="3" fill="#f00" /><path fill="#fff" d="M6.300 3.500v5L10.500 6z" /></Svg>],
  ["Add", <Plus />],
];

const rows = [
  ["css/", "Folder", "-", "-", "-"],
  ["img/", "Folder", "-", "-", "-"],
  ["index.html", "html", "December 21, 2022, 13:38:33 (UTC+02:00)", "6.1 KB", "Standard"],
  ["vendor/", "Folder", "-", "-", "-"],
];

export default function App() {
  return (
    <Screen>
      <GlobalStyle />
      <SystemBar>
        <SystemLeft>
          <button>Activities</button>
          <AppMenu><EdgeLogo s={16} id="eg" grey />Microsoft Edge</AppMenu>
        </SystemLeft>
        <Clock dir="ltr"><span>16:06</span><span>21</span><span>ديس</span></Clock>
        <Tray>
          <EdgeLogo s={16} id="et" />
          <Svg w={16} h={14} vb="0 0 16 14" stroke="#eee"><path d="M1 4q7-6 14 0" strokeWidth="1.600" /><path fill="#eee" stroke="none" d="M2.500 5.500q5.500-4 11 0L8 13z" /></Svg>
          <Svg w={16} h={14} vb="0 0 16 14" stroke="#eee" strokeWidth="1.200"><path fill="#eee" stroke="none" d="M0 4.500h3L7.500.500v13L3 9.500H0z" /><path d="M9.500 4.500q2 2.500 0 5" /><path stroke="#aaa" d="M12 2.500q3.500 4.500 0 9" /></Svg>
          <Svg w={17} h={16} vb="0 0 17 16" stroke="#eee" strokeWidth="1.300"><rect x="3" y="0" width="5" height="10" rx="2.500" fill="#eee" stroke="none" /><path d="M.8 7q0 5 4.700 5t4.700-5M5.500 12v3M2.500 15.300h6" /><path stroke="#999" d="M13 5q-2 3 0 6M16 3.500q-3 4.500 0 9" /></Svg>
          <Svg w={16} h={16} stroke="#eee" strokeWidth="1.400"><path fill="#eee" stroke="none" d="M4 3L0 8.500h2L1.500 13 5 7H3z" /><path fill="#eee" stroke="none" d="M9 0h4v2H9z" /><rect x="6.700" y="1.800" width="8.600" height="13.400" rx="1.500" /><path fill="#4e9a06" stroke="none" d="M8 7h6v7H8z" /></Svg>
        </Tray>
      </SystemBar>

      <Desktop>
        <Wallpaper>
          <Dock aria-label="Dock">
            <DockButton aria-label="Firefox"><Firefox /></DockButton>
            <DockButton aria-label="Files"><Files /></DockButton>
            <DockButton aria-label="Microsoft Edge" $active><EdgeLogo s={48} id="ed" /><Running><i /><i /></Running></DockButton>
            <DockButton aria-label="Visual Studio Code"><VsCode /></DockButton>
          </Dock>
        </Wallpaper>

        <Browser>
          <TabStrip>
            <TabMenu aria-label="Tab actions"><Svg s={15} vb="0 0 15 15" stroke="#333"><rect x="1" y="1" width="13" height="13" rx="2" /><path d="M1 3h13M5 4v10" strokeWidth="1.200" /><path d="M1.500 2.200h12" strokeWidth="2" /></Svg></TabMenu>
            {tabItems.map((t) => (
              <Tab key={t.t} $active={t.active} $bare={t.active || t.bare}>
                <TabIcon>{t.i}</TabIcon>
                <TabTitle>{t.t}</TabTitle>
                <TabClose aria-label="Close tab"><Close w={1.3} /></TabClose>
              </Tab>
            ))}
            <NewTab aria-label="New tab"><Plus s={14} /></NewTab>
            <WindowControls>
              <Round aria-label="Minimise"><Svg s={10} vb="0 0 10 10" stroke="#333"><path d="M1 7.500h8" strokeWidth="1.200" /></Svg></Round>
              <Round aria-label="Restore"><Svg s={9} vb="0 0 9 9" stroke="#333"><path d="M1 3h5v5.500H1z" strokeWidth="1.200" /><path stroke="#777" d="M3 .8h5.500V6.500" /></Svg></Round>
              <Round aria-label="Close"><Close s={10} w={1.4} /></Round>
            </WindowControls>
          </TabStrip>

          <AddressRow>
            <NavButtons>
              <button aria-label="Back"><Svg s={16} stroke="#333" strokeWidth="1.100"><path d="M16 8H1M8 1L1 8l7 7" /></Svg></button>
              <button aria-label="Reload"><Svg s={16} stroke="#333" strokeWidth="1.100"><path d="M15 8.500A7 7 0 1 1 13.500 4L15 5M15 1v4.500h-4.500" /></Svg></button>
              <button aria-label="Home"><Svg s={16} stroke="#333" strokeWidth="1.100"><path d="M1.500 7Q1.500 6.500 2 6L8 .8l6 5.200q.5.500.5 1v7.500h-4V10q0-1.500-1-1.500h-3q-1 0-1 1.500v4.500h-4z" strokeLinejoin="round" /></Svg></button>
            </NavButtons>
            <AddressBox>
              <Svg w={13} h={16} vb="0 0 13 16" stroke="#444"><rect x=".6" y="5.500" width="11.800" height="10" rx="1.500" /><path d="M3.500 5.500V3.500a3 3 0 0 1 6 0v2" /><circle cx="6.500" cy="10.500" r=".8" fill="#444" stroke="none" /></Svg>
              <Address aria-label="Address" defaultValue="https://s3.console.aws.amazon.com/s3/buckets/udacity-project-2.1?region=us-east-1&prefix=project2/&showversions=false" />
              <Svg w={18} h={17} vb="0 0 18 17" stroke="#666"><path d="M7 15l-3 1 .5-5L1 7l4.800-.8L8 1l2.300 5 5 .8-2 2" /><circle cx="13" cy="12.500" r="4.500" fill="#666" stroke="none" /><path stroke="#fff" strokeWidth="1.200" d="M13 10v5M10.500 12.500h5" /></Svg>
            </AddressBox>
            <ToolButtons>
              <button aria-label="Extensions"><Svg s={16} stroke="#333" strokeWidth="1.100"><path strokeLinejoin="round" d="M3 2.500h3q0-2 2-2t2 2h4v3.500q-2-.3-2 2t2 2v3.500h-4q0 2-2 2t-2-2H3V10Q1 10 1 8t2-2z" /></Svg></button>
              <Bar />
              <button aria-label="Collections"><Svg w={17} h={17} vb="0 0 17 17" stroke="#333" strokeWidth="1.100"><rect x="6" y="6" width="10.500" height="10.500" rx="2" /><path d="M11.200 8v6.500M8 11.200h6.500M4 12L1.500 5Q1 3.500 2.500 3M4 12V5q0-2 2-2h6q0-2-2-2L3 2.500" /></Svg></button>
              <Avatar aria-label="Profile"><Svg s={24} vb="0 0 24 24" stroke="none"><defs><clipPath id="av"><circle cx="12" cy="12" r="12" /></clipPath></defs><g clipPath="url(#av)"><path fill="#d9d9d9" d="M0 0h24v24H0z" /><path stroke="#b8b8b8" d="M0 5h7M0 9h6M0 13h5M17 5h7M18 9h6M19 13h5" /><path fill="#f3f3f3" d="M4 24q0-8 5-10h6q5 2 5 10z" /><path fill="#aaa" d="M8.500 5h6v5q-1 4-3 4t-3-4z" /><path fill="#333" d="M8 6Q7.500 2.500 11.500 2.500T15 6l-1-1H9z" /><path fill="#bbb" d="M9 13h6v3l-3 2-3-2z" /><path fill="#1d1d1d" d="M6 20h12v4H6z" /></g></Svg></Avatar>
              <button aria-label="More"><Svg w={14} h={4} vb="0 0 14 4" stroke="none" fill="#444"><circle cx="2" cy="2" r="1.300" /><circle cx="7" cy="2" r="1.300" /><circle cx="12" cy="2" r="1.300" /></Svg></button>
            </ToolButtons>
          </AddressRow>

          <Bookmarks>
            {bookmarkItems.map(([t, i, w, dir]) => (
              <Bookmark key={t} href="#" $w={w}><BookmarkIcon>{i}</BookmarkIcon><span dir={dir}>{t}</span></Bookmark>
            ))}
          </Bookmarks>

          <PageRow>
            <Page>
              <AwsHeader>
                <HeaderRow>
                  <LogoLink href="#" aria-label="AWS"><AwsLogo /></LogoLink>
                  <Divider />
                  <Services><Apps />Services</Services>
                  <AwsSearch><Magnify s={14} /><input placeholder="Search" aria-label="Search" /><span>[Alt+S]</span></AwsSearch>
                  <Account>
                    <button aria-label="CloudShell"><Svg s={16} strokeWidth="1.800"><rect x="1" y="1" width="14" height="14" rx="1.500" /><path d="M4 4.500L7.500 8 4 11.500M9 12h3.500" /></Svg></button>
                    <Divider />
                    <button aria-label="Notifications"><Svg s={16} strokeWidth="1.700"><path d="M8 0v2M1.500 12q3-2 3-6.500Q5 2 8 2t3.500 3.500q0 4.500 3 6.500zM6 13q.5 2 2 2t2-2" /></Svg></button>
                    <Divider />
                    <button aria-label="Help"><Svg s={16} strokeWidth="1.700"><circle cx="8" cy="8" r="7" /><path d="M5.700 6.500Q5.700 4.200 8 4.200t2.300 2Q10.300 7.300 8 8.300V9.700M8 11v1.600" /></Svg></button>
                    <Divider />
                    <MenuButton>Global <Caret /></MenuButton>
                    <Divider />
                    <MenuButton>voclabs/user2310031=48955fd8-c57a-11e9-8c17-bb93629a0afd @ 60... <Caret /></MenuButton>
                  </Account>
                </HeaderRow>
                <Favorites>
                  {favorites.map(([t, i]) => <Favorite key={t} href="#">{i}{t}</Favorite>)}
                </Favorites>
              </AwsHeader>

              <Console>
                <SideNav>
                  <SideTitle>Amazon S3<button aria-label="Close navigation"><Svg s={14} vb="0 0 14 14" stroke="#545b64" strokeWidth="2"><path d="M1 1l12 12M13 1L1 13" /></Svg></button></SideTitle>
                  <SideList $pad="21px">
                    <li><SideLink href="#" $current>Buckets</SideLink></li>
                    {["Access Points", "Object Lambda Access Points", "Multi-Region Access Points", "Batch Operations", "Access analyzer for S3"].map((t) => (
                      <li key={t}><SideLink href="#">{t}</SideLink></li>
                    ))}
                  </SideList>
                  <SideList>
                    <li><SideLink href="#">Block Public Access settings for this account</SideLink></li>
                    <li><Group><Caret s={10} />Storage Lens</Group></li>
                    <li><SideLink href="#">Dashboards</SideLink></li>
                    <li><SideLink href="#">AWS Organizations settings</SideLink></li>
                  </SideList>
                  <SideList $end="23px">
                    <li><Spotlight href="#">Feature spotlight <Badge>3</Badge></Spotlight></li>
                  </SideList>
                </SideNav>

                <Content>
                  <nav aria-label="Breadcrumb">
                    <Crumbs>
                      {["Amazon S3", "Buckets", "udacity-project-2.1"].map((t) => <li key={t}><a href="#">{t}</a><Chevron c="#687078" /></li>)}
                      <li>project2/</li>
                    </Crumbs>
                  </nav>
                  <TitleRow>
                    <Title>project2/</Title>
                    <Button $icon><Copy />Copy S3 URI</Button>
                  </TitleRow>
                  <Tabs role="tablist">
                    <PageTab role="tab" aria-selected="true" $active><span>Objects</span></PageTab>
                    <PageTab role="tab" aria-selected="false"><span>Properties</span></PageTab>
                  </Tabs>

                  <Card>
                    <CardHeader>
                      <CardTitle>Objects <span>(4)</span></CardTitle>
                      <Description>
                        <span>Objects are the fundamental entities stored in Amazon S3. You can use</span>
                        <Link href="#">Amazon S3 inventory <External /></Link>
                        <span>to get a list of all objects in your bucket. For others to access your objects, you’ll need to explicitly grant them permissions.</span>
                        <Link href="#">Learn more <External /></Link>
                      </Description>
                      <Actions>
                        <Button $square aria-label="Refresh"><Refresh /></Button>
                        <Button $icon disabled><Copy />Copy S3 URI</Button>
                        <Button $icon disabled><Copy />Copy URL</Button>
                        <Button $icon disabled><Download />Download</Button>
                        <Button disabled>Open<External /></Button>
                        <Button disabled>Delete</Button>
                        <Button $gap={12}>Actions<Caret s={10} /></Button>
                        <Button>Create folder</Button>
                        <Button $icon $primary><UploadIcon />Upload</Button>
                      </Actions>
                      <FilterRow>
                        <Filter><Magnify s={15} /><input placeholder="Find objects by prefix" aria-label="Find objects by prefix" /></Filter>
                        <Pager>
                          <button aria-label="Previous page"><Chevron left c="#aab7b8" /></button>
                          <b>1</b>
                          <button aria-label="Next page"><Chevron c="#aab7b8" /></button>
                          <Settings aria-label="Preferences"><Gear /></Settings>
                        </Pager>
                      </FilterRow>
                    </CardHeader>
                    <Table>
                      <colgroup><Col $w={54} /><Col $w={354} /><Col $w={235} /><Col /><Col $w={222} /><Col $w={380} /></colgroup>
                      <thead>
                        <tr>
                          <th><Check aria-label="Select all" /></th>
                          <th><HeadCell $sorted>Name<SortUp /></HeadCell></th>
                          {["Type", "Last modified", "Size", "Storage class"].map((t) => <th key={t}><HeadCell>{t}<SortNone /></HeadCell></th>)}
                        </tr>
                      </thead>
                      <tbody>
                        {rows.map(([n, type, mod, size, cls]) => (
                          <tr key={n}>
                            <CheckCell><Check aria-label={"Select " + n} /></CheckCell>
                            <td><NameLink href="#">{type === "html" ? <FileSmall /> : <FolderSmall />}{n}</NameLink></td>
                            <td>{type}</td>
                            <td>{mod}</td>
                            <Right>{size}</Right>
                            <td>{cls}</td>
                          </tr>
                        ))}
                      </tbody>
                    </Table>
                  </Card>
                </Content>
              </Console>
            </Page>
            <EdgeRail aria-label="Sidebar apps">
              {rail.map(([t, i]) => <RailButton key={t} href="#" aria-label={t}>{i}</RailButton>)}
            </EdgeRail>
          </PageRow>
        </Browser>
      </Desktop>
    </Screen>
  );
}
